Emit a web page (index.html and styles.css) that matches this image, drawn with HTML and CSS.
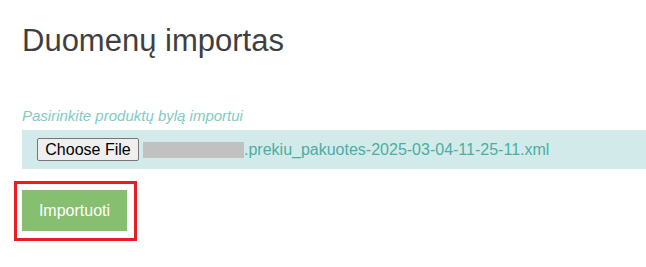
FILE: index.html
```html
<!DOCTYPE html>
<html lang="lt">
<head>
<meta charset="utf-8">
<title>Duomenų importas</title>
<link rel="stylesheet" href="styles.css">
</head>
<body>
<main class="page">
  <h1 class="title">Duomenų importas</h1>
  <label class="field-label">Pasirinkite produktų bylą importui</label>
  <div class="file-row">
    <button class="choose-btn" type="button">Choose File</button>
    <span class="redacted"></span><span class="file-name">.prekiu_pakuotes-2025-03-04-11-25-11.xml</span>
  </div>
  <div class="highlight">
    <button class="import-btn" type="button">Importuoti</button>
  </div>
</main>
</body>
</html>
```
FILE: styles.css
```css
html, body {
  margin: 0;
  padding: 0;
  background: #ffffff;
}
.page {
  padding: 23px 0 0 22px;
  font-family: "Liberation Sans", Arial, sans-serif;
  display: flex;
  flex-direction: column;
  align-items: flex-start;
}
.title {
  margin: 0;
  font-size: 31px;
  line-height: 36px;
  font-weight: normal;
  color: #3f3f3f;
}
.field-label {
  margin-top: 48px;
  font-size: 15px;
  line-height: 18px;
  font-style: italic;
  color: #80cbc4;
}
.file-row {
  margin-top: 5px;
  align-self: stretch;
  height: 39px;
  box-sizing: border-box;
  background: #d2ebea;
  display: flex;
  align-items: center;
  padding-left: 15px;
}
.choose-btn {
  width: 102px;
  height: 23px;
  box-sizing: border-box;
  padding: 0;
  font-family: "Liberation Sans", Arial, sans-serif;
  font-size: 16px;
  color: #000;
  background: #efefef;
  border: 1px solid #767676;
  border-radius: 2px;
  margin-right: 4px;
}
.redacted {
  width: 101px;
  height: 16px;
  background: #c1c1c1;
}
.file-name {
  font-size: 16px;
  color: #4cada3;
}
.highlight {
  margin: 12px 0 0 -8px;
  border: 3px solid #ea1c24;
  padding: 6px 7px 7px 5px;
}
.import-btn {
  display: block;
  width: 105px;
  height: 41px;
  border: none;
  background: #86bf6f;
  color: #ffffff;
  font-family: "Liberation Sans", Arial, sans-serif;
  font-size: 16px;
  padding: 0;
}
```
